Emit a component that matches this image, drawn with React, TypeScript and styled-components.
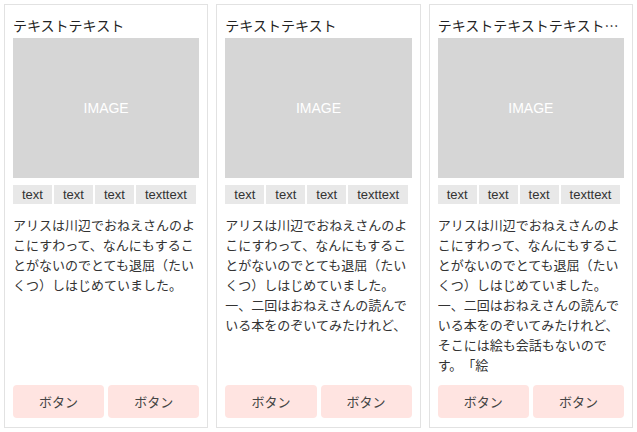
import React from "react";
import styled, { createGlobalStyle } from "styled-components";

const GlobalStyle = createGlobalStyle`
  html, body {
    margin: 0;
    padding: 0;
    background: #fff;
  }
  body {
    font-family: "Liberation Sans", "Noto Sans CJK JP", sans-serif;
    color: #333;
    text-spacing-trim: space-all;
  }
`;

const Grid = styled.div`
  box-sizing: border-box;
  height: 100vh;
  padding: 4px;
  display: grid;
  grid-template-columns: repeat(3, 1fr);
  gap: 8px;
`;

const Card = styled.article`
  box-sizing: border-box;
  min-width: 0;
  border: 1px solid #e2e2e2;
  padding: 8px 8px 9px;
  display: flex;
  flex-direction: column;
  overflow: hidden;
`;

const Title = styled.h2`
  margin: 0 0 1px;
  font-family: "Noto Sans CJK JP", sans-serif;
  font-size: 14px;
  font-weight: normal;
  line-height: 24px;
  color: #222;
  white-space: nowrap;
  overflow: hidden;
  text-overflow: ellipsis;
`;

const Thumb = styled.div`
  height: 140px;
  background: #d6d6d6;
  color: #fff;
  font-size: 14px;
  display: flex;
  align-items: center;
  justify-content: center;
`;

const Tags = styled.ul`
  list-style: none;
  margin: 7px 0 0;
  padding: 0;
  display: flex;
  gap: 2px;
`;

const Tag = styled.li`
  background: #e8e8e8;
  font-size: 13px;
  line-height: 19px;
  padding: 0 9px;
  color: #333;
`;

const Body = styled.p`
  flex: 1;
  margin: 12px 0 0;
  font-size: 13px;
  line-height: 20px;
  overflow: hidden;
  text-spacing-trim: space-all;
`;

const Actions = styled.div`
  display: flex;
  gap: 4px;
  margin-top: 8px;
`;

const Button = styled.button`
  flex: 1;
  height: 33px;
  border: none;
  border-radius: 4px;
  background: #ffe4e1;
  color: #444;
  font-family: inherit;
  font-size: 13px;
  cursor: pointer;
`;

type Item = { title: string; text: string[] };

const items: Item[] = [
  {
    title: "テキストテキスト",
    text: ["アリスは川辺でおねえさんのよこにすわって、なんにもすることがないのでとても退屈（たいくつ）しはじめていました。"],
  },
  {
    title: "テキストテキスト",
    text: [
      "アリスは川辺でおねえさんのよこにすわって、なんにもすることがないのでとても退屈（たいくつ）しはじめていました。",
      "一、二回はおねえさんの読んでいる本をのぞいてみたけれど、",
    ],
  },
  {
    title: "テキストテキストテキストテキスト",
    text: [
      "アリスは川辺でおねえさんのよこにすわって、なんにもすることがないのでとても退屈（たいくつ）しはじめていました。",
      "一、二回はおねえさんの読んでいる本をのぞいてみたけれど、そこには絵も会話もないのです。「絵",
    ],
  },
];

const tags = ["text", "text", "text", "texttext"];

function App() {
  return (
    <>
      <GlobalStyle />
      <Grid>
        {items.map((item, i) => (
          <Card key={i}>
            <Title>{item.title}</Title>
            <Thumb>IMAGE</Thumb>
            <Tags>
              {tags.map((t, j) => (
                <Tag key={j}>{t}</Tag>
              ))}
            </Tags>
            <Body>
              {item.text.map((line, j) => (
                <React.Fragment key={j}>
                  {j > 0 && <br />}
                  {line}
                </React.Fragment>
              ))}
            </Body>
            <Actions>
              <Button>ボタン</Button>
              <Button>ボタン</Button>
            </Actions>
          </Card>
        ))}
      </Grid>
    </>
  );
}

export default App;
